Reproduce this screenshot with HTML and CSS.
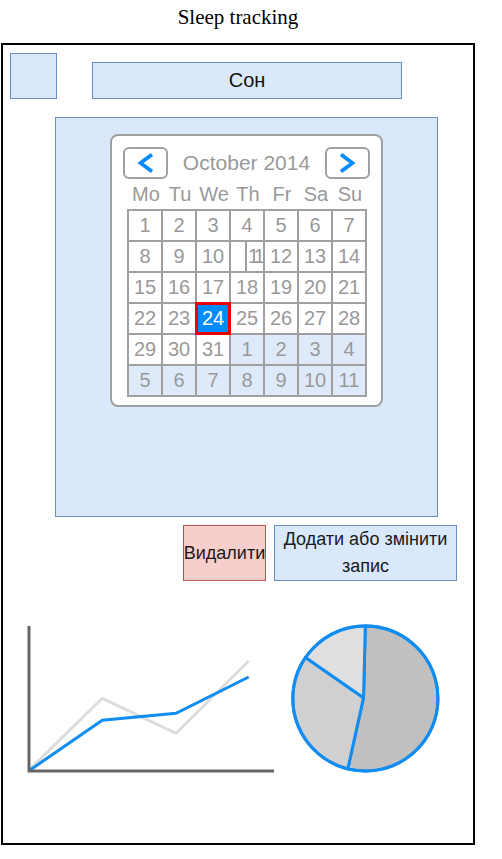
FILE: index.html
```
<!DOCTYPE html>
<html>
<head>
<meta charset="utf-8">
<title>Sleep tracking</title>
<link rel="stylesheet" href="styles.css">
</head>
<body>
<div class="title">Sleep tracking</div>
<div class="frame">
  <div class="header">
    <div class="square"></div>
    <div class="bar">Сон</div>
  </div>
  <div class="cal-area">
    <div class="cal">
      <div class="nav">
        <div class="navbtn"><svg width="16" height="22" viewBox="0 0 16 22"><polyline points="14,2.5 2.5,11 14,19.5" fill="none" stroke="#008cff" stroke-width="3.8"/></svg></div>
        <div class="month">October 2014</div>
        <div class="navbtn"><svg width="16" height="22" viewBox="0 0 16 22"><polyline points="2,2.5 13.5,11 2,19.5" fill="none" stroke="#008cff" stroke-width="3.8"/></svg></div>
      </div>
      <div class="dows">
        <span>Mo</span><span>Tu</span><span>We</span><span>Th</span><span>Fr</span><span>Sa</span><span>Su</span>
      </div>
      <div class="grid">
        <div>1</div><div>2</div><div>3</div><div>4</div><div>5</div><div>6</div><div>7</div>
        <div>8</div><div>9</div><div>10</div><div class="odd"><span>11</span></div><div>12</div><div>13</div><div>14</div>
        <div>15</div><div>16</div><div>17</div><div>18</div><div>19</div><div>20</div><div>21</div>
        <div>22</div><div>23</div><div class="sel">24</div><div>25</div><div>26</div><div>27</div><div>28</div>
        <div>29</div><div>30</div><div>31</div><div class="next">1</div><div class="next">2</div><div class="next">3</div><div class="next">4</div>
        <div class="next">5</div><div class="next">6</div><div class="next">7</div><div class="next">8</div><div class="next">9</div><div class="next">10</div><div class="next">11</div>
      </div>
    </div>
  </div>
  <div class="actions">
    <div class="btn del">Видалити</div>
    <div class="btn edit">Додати або змінити<br>запис</div>
  </div>
  <div class="charts">
    <svg class="line-chart" width="250" height="150" viewBox="0 0 250 150">
      <polyline points="3,146 76.3,74.3 150,109.3 222.7,37" fill="none" stroke="#dddddd" stroke-width="3"/>
      <polyline points="3,146.7 76.3,96.3 150,89.3 222.7,53" fill="none" stroke="#118cf0" stroke-width="3"/>
      <polyline points="3,2 3,147 248,147" fill="none" stroke="#666666" stroke-width="3"/>
    </svg>
    <svg class="pie" width="153" height="153" viewBox="0 0 153 153">
      <path d="M74.5,75.8 L76.3,4 A72.5,72.5 0 1 1 58.8,146.8 Z" fill="#c0c0c0" stroke="#118cf0" stroke-width="3" stroke-linejoin="round"/>
      <path d="M74.5,75.8 L58.8,146.8 A72.5,72.5 0 0 1 16.6,35.4 Z" fill="#d0d0d0" stroke="#118cf0" stroke-width="3" stroke-linejoin="round"/>
      <path d="M74.5,75.8 L16.6,35.4 A72.5,72.5 0 0 1 76.3,4 Z" fill="#e0e0e0" stroke="#118cf0" stroke-width="3" stroke-linejoin="round"/>
      <circle cx="76.3" cy="76.5" r="72.5" fill="none" stroke="#118cf0" stroke-width="3"/>
    </svg>
  </div>
</div>
</body>
</html>
```
FILE: styles.css
```
* { box-sizing: border-box; }
body {
  margin: 0;
  background: #fff;
  font-family: "Liberation Sans", Arial, sans-serif;
}
.title {
  width: 476px;
  height: 43px;
  line-height: 34px;
  text-align: center;
  font-family: "Liberation Serif", "Times New Roman", serif;
  font-size: 21px;
  color: #000;
}
.frame {
  margin-left: 1px;
  width: 474px;
  height: 802px;
  border: 2px solid #000;
}
.header {
  display: flex;
  align-items: flex-start;
  padding: 8px 0 0 7px;
}
.square {
  width: 47px;
  height: 46px;
  background: #dae8fc;
  border: 1.5px solid #6c8ebf;
}
.bar {
  margin: 9px 0 0 35px;
  width: 310px;
  height: 37px;
  background: #dae8fc;
  border: 1.5px solid #6c8ebf;
  text-align: center;
  line-height: 34px;
  font-size: 20px;
  color: #111;
}
.cal-area {
  margin: 18px 0 0 52px;
  width: 383px;
  height: 400px;
  background: #dae8fc;
  border: 1.5px solid #6c8ebf;
  padding: 16px 0 0 54px;
}
.cal {
  width: 273px;
  height: 273px;
  background: #fff;
  border: 2px solid #a0a0a0;
  border-radius: 8px;
  padding: 11px 14px 0 15px;
}
.nav {
  display: flex;
  align-items: center;
  justify-content: space-between;
  margin: 0 -3px 0 -4px;
  height: 32px;
}
.navbtn {
  width: 45px;
  height: 32px;
  border: 2px solid #a0a0a0;
  border-radius: 6px;
  display: flex;
  align-items: center;
  justify-content: center;
}
.month {
  font-size: 21px;
  color: #999;
  line-height: 32px;
}
.dows {
  display: grid;
  grid-template-columns: 2px repeat(7, 34px);
  height: 30px;
  align-items: center;
  font-size: 20px;
  color: #999;
}
.dows span {
  text-align: center;
  line-height: 30px;
}
.dows span:first-child { grid-column: 2; }
.grid {
  display: grid;
  grid-template-columns: repeat(7, 34px);
  grid-auto-rows: 31px;
  width: 240px;
  border-top: 2px solid #a0a0a0;
  border-left: 2px solid #a0a0a0;
  font-size: 20px;
  color: #999;
}
.grid > div {
  border-right: 2px solid #a0a0a0;
  border-bottom: 2px solid #a0a0a0;
  text-align: center;
  line-height: 29px;
}
.grid > .next { background: #deeafa; }
.grid > .odd {
  padding-left: 14px;
  text-align: left;
}
.odd span {
  display: block;
  height: 29px;
  border-left: 2px solid #a0a0a0;
  padding-left: 1px;
  white-space: nowrap;
  letter-spacing: -4px;
}
.grid > .sel {
  position: relative;
  background: #008cff;
  color: #fff;
}
.sel::after {
  content: "";
  position: absolute;
  top: -2px;
  left: -2px;
  right: -2px;
  bottom: -2px;
  border: 3px solid #ee0000;
}
.actions {
  display: flex;
  gap: 8px;
  margin: 8px 0 0 180px;
}
.btn {
  height: 56px;
  display: flex;
  align-items: center;
  justify-content: center;
  text-align: center;
  font-size: 18px;
  line-height: 27px;
  color: #1a1a1a;
}
.del {
  width: 83px;
  background: #f8cecc;
  border: 1.5px solid #b85450;
  white-space: nowrap;
}
.edit {
  width: 183px;
  background: #dae8fc;
  border: 1.5px solid #6c8ebf;
}
.charts {
  display: flex;
  align-items: flex-start;
  gap: 13px;
  margin: 41px 0 0 23px;
}
.line-chart { margin-top: 2px; display: block; }
.pie { display: block; }
```
